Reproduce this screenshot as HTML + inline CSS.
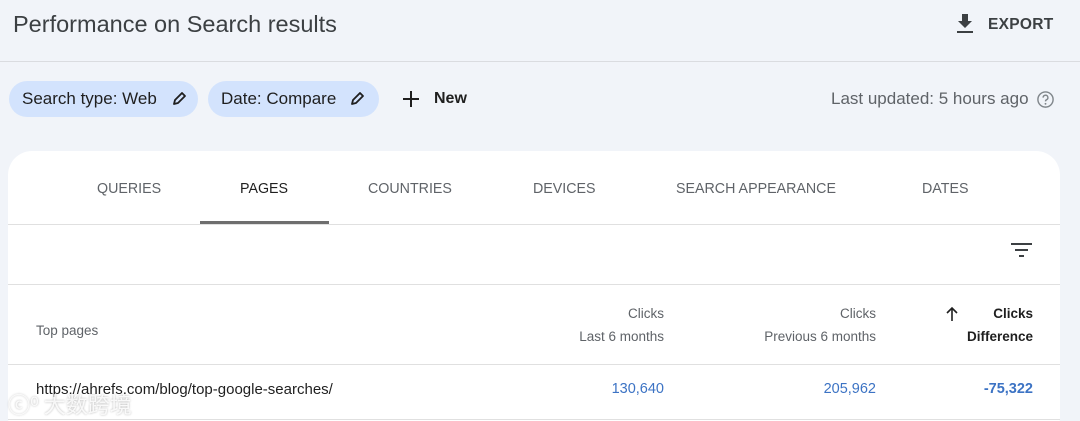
<!DOCTYPE html>
<html><head><meta charset="utf-8"><style>
*{margin:0;padding:0;box-sizing:border-box}
html,body{width:1080px;height:421px;overflow:hidden}
body{background:#f1f4f9;font-family:"Liberation Sans",Arial,sans-serif;position:relative;color:#1f1f1f}
.a{position:absolute;white-space:nowrap}
.chip{position:absolute;top:81px;height:36px;background:#d3e3fd;border-radius:18px;font-size:17px;line-height:36px;padding-left:13px;color:#1f1f1f}
.card{position:absolute;left:8px;top:151px;width:1052px;height:290px;background:#fff;border-radius:24px}
.tab{position:absolute;top:180px;font-size:15px;color:#5f6368;transform-origin:left;transform:scaleX(.95)}
.hl{position:absolute;left:8px;width:1052px;height:1px;background:#e0e0e0}
.th{position:absolute;font-size:13.5px;color:#5f6368;text-align:right}
.num{position:absolute;top:381px;font-size:14.5px;color:#3c73c4;text-align:right}
</style></head><body>
<div class="a" style="left:13px;top:11px;font-size:23.5px;color:#3c4043">Performance on Search results</div>
<svg class="a" style="left:955px;top:13px" width="20" height="22" viewBox="0 0 20 22"><path d="M7 1h6v7h4l-7 7-7-7h4z" fill="#3c4043"/><rect x="2" y="18" width="16" height="2" fill="#3c4043"/></svg>
<div class="a" style="left:988px;top:16px;font-size:15.5px;font-weight:bold;color:#3c4043;letter-spacing:.3px">EXPORT</div>
<div class="a" style="left:0;top:61px;width:1080px;height:1px;background:#dadce0"></div>
<div class="chip" style="left:9px;width:189px">Search type: Web
<svg style="position:absolute;left:162px;top:10px" width="16" height="16" viewBox="0 0 16 16"><path d="M3 13l1-4 7-7 3 3-7 7z" fill="none" stroke="#1f1f1f" stroke-width="1.8" stroke-linejoin="round"/></svg></div>
<div class="chip" style="left:208px;width:171px">Date: Compare
<svg style="position:absolute;left:141px;top:10px" width="16" height="16" viewBox="0 0 16 16"><path d="M3 13l1-4 7-7 3 3-7 7z" fill="none" stroke="#1f1f1f" stroke-width="1.8" stroke-linejoin="round"/></svg></div>
<svg class="a" style="left:401px;top:89px" width="20" height="20"><path d="M10 2v16M2 10h16" stroke="#1f1f1f" stroke-width="2"/></svg>
<div class="a" style="left:434px;top:90px;font-size:16px;font-weight:bold;color:#1f1f1f">New</div>
<div class="a" style="left:831px;top:89px;font-size:17px;color:#5f6368">Last updated: 5 hours ago</div>
<svg class="a" style="left:1036px;top:90px" width="19" height="19" viewBox="0 0 20 20"><circle cx="10" cy="10" r="8" fill="none" stroke="#80868b" stroke-width="1.5"/><path d="M7.5 8a2.5 2.5 0 1 1 3.5 2.3c-.7.3-1 .8-1 1.7" fill="none" stroke="#80868b" stroke-width="1.5"/><circle cx="10" cy="14.5" r="1" fill="#80868b"/></svg>
<div class="card"></div>
<div class="tab" style="left:97px">QUERIES</div>
<div class="tab" style="left:240px;color:#1f1f1f">PAGES</div>
<div class="tab" style="left:368px">COUNTRIES</div>
<div class="tab" style="left:533px">DEVICES</div>
<div class="tab" style="left:676px">SEARCH APPEARANCE</div>
<div class="tab" style="left:922px">DATES</div>
<div class="a" style="left:200px;top:221px;width:129px;height:3px;background:#6e6e6e"></div>
<div class="hl" style="top:224px"></div>
<svg class="a" style="left:1011px;top:241px" width="22" height="18"><path d="M0 3h21M4 9h13M8 15h5" stroke="#3c4043" stroke-width="2"/></svg>
<div class="hl" style="top:284px"></div>
<div class="a" style="left:36px;top:323px;font-size:13.5px;color:#5f6368">Top pages</div>
<div class="th" style="right:416px;top:302px;line-height:23px">Clicks<br>Last 6 months</div>
<div class="th" style="right:204px;top:302px;line-height:23px">Clicks<br>Previous 6 months</div>
<div class="th" style="right:47px;top:302px;line-height:23px;color:#1f1f1f;font-weight:bold">Clicks<br>Difference</div>
<svg class="a" style="left:945px;top:306px" width="14" height="16"><path d="M7 15V2M2 7l5-5 5 5" fill="none" stroke="#1f1f1f" stroke-width="1.6"/></svg>
<div class="hl" style="top:364px"></div>
<div class="a" style="left:36px;top:381px;font-size:15px;color:#1f1f1f">https://ahrefs.com/blog/top-google-searches/</div>
<div class="num" style="right:416px">130,640</div>
<div class="num" style="right:204px">205,962</div>
<div class="num" style="right:47px;font-weight:bold">-75,322</div>
<div class="hl" style="top:419px"></div>
<div class="a" style="left:8px;top:388px;font-size:22px;color:rgba(255,255,255,.85);font-family:'Noto Sans CJK SC',sans-serif;text-shadow:0 0 2px rgba(0,0,0,.3)">ⓒ⁰ 大数跨境</div>
</body></html>
